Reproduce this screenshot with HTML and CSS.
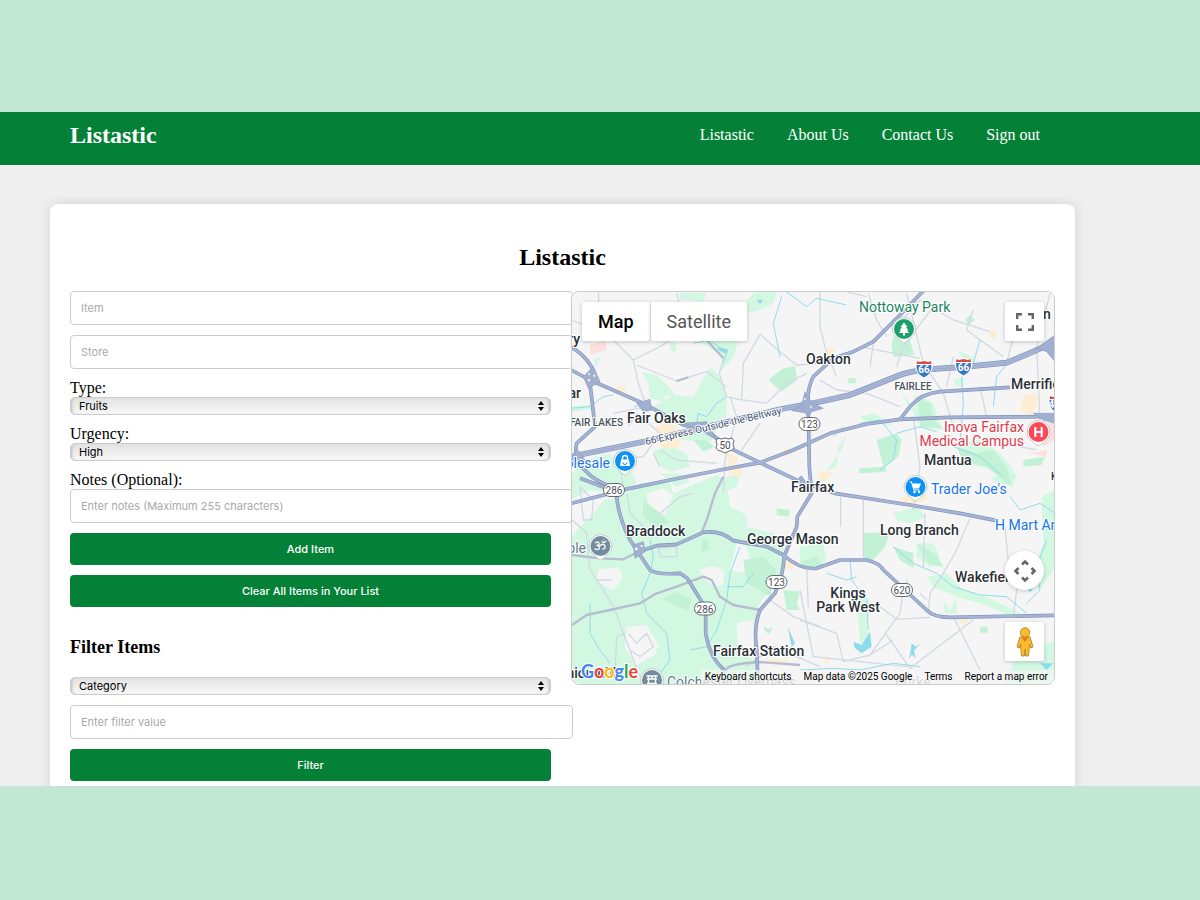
FILE: index.html
```html
<!DOCTYPE html>
<html lang="en">
<head>
<meta charset="utf-8">
<meta name="viewport" content="width=device-width, initial-scale=1">
<title>Listastic</title>
<link rel="stylesheet" href="styles.css">
</head>
<body>
<div class="screen">
  <header class="site-header">
    <a class="logo" href="#">Listastic</a>
    <nav class="nav">
      <a href="#">Listastic</a>
      <a href="#">About Us</a>
      <a href="#">Contact Us</a>
      <a href="#">Sign out</a>
    </nav>
  </header>
  <main class="card">
    <h1>Listastic</h1>
    <div class="columns">
      <div class="forms">
        <form class="stack">
          <input class="field" type="text" placeholder="Item" aria-label="Item">
          <input class="field" type="text" placeholder="Store" aria-label="Store">
          <div class="group">
            <label for="type">Type:</label>
            <div class="select-wrap">
              <select id="type"><option>Fruits</option><option>Vegetables</option></select>
              <svg class="arrows" viewBox="0 0 6 10"><path d="M3 0L6 4H0zM3 10L0 6H6z"/></svg>
            </div>
          </div>
          <div class="group">
            <label for="urgency">Urgency:</label>
            <div class="select-wrap">
              <select id="urgency"><option>High</option><option>Low</option></select>
              <svg class="arrows" viewBox="0 0 6 10"><path d="M3 0L6 4H0zM3 10L0 6H6z"/></svg>
            </div>
          </div>
          <div class="group">
            <label for="notes">Notes (Optional):</label>
            <input class="field" id="notes" type="text" placeholder="Enter notes (Maximum 255 characters)">
          </div>
          <button class="btn" type="button">Add Item</button>
          <button class="btn" type="button">Clear All Items in Your List</button>
        </form>
        <h2>Filter Items</h2>
        <form class="stack">
          <div class="select-wrap">
            <select aria-label="Filter by"><option>Category</option><option>Store</option></select>
            <svg class="arrows" viewBox="0 0 6 10"><path d="M3 0L6 4H0zM3 10L0 6H6z"/></svg>
          </div>
          <input class="field" type="text" placeholder="Enter filter value" aria-label="Filter value">
          <button class="btn" type="button">Filter</button>
        </form>
      </div>
      <section class="map" aria-label="Map">
        <svg class="map-art" viewBox="572 292 482 392" preserveAspectRatio="xMidYMid slice">
          <defs>
            <g id="pin"><path class="pin-edge" d="M-11.500 0a11.500 11.500 0 1 1 23 0c0 7-6 9-9.500 13q-2 2-4 0C-5.500 9-11.500 7-11.500 0z"/><circle r="10"/></g>
            <g id="oval"><rect x="-10.500" y="-6.500" width="21" height="13" rx="6.500"/></g>
            <g id="interstate">
              <path fill="#fff" d="M-8-9L-5-8 0-9 5-8 8-9 9-3Q8 6 0 9.500-8 6-9-3z"/>
              <path fill="#3b76c4" d="M-7.500-4H7.500Q8 5 0 8.500-8 5-7.500-4z"/>
              <path fill="#dc4b43" d="M-7-8L-4.500-7 0-8 4.500-7 7-8 7.500-5H-7.500z"/>
            </g>
          </defs>
          <rect class="land" x="560" y="280" width="510" height="420"/>
          <g transform="translate(560 280) scale(.33333)">
            <g class="green">
              <path d="M33 590L60 545 150 520 175 560 215 575 230 610 160 640 90 630 33 660z"/>
              <path d="M33 770L110 690 130 660 180 650 240 610 330 605 340 640 470 585 500 600 510 680 560 705 560 740 640 760 680 800 660 880 590 985 590 1110 600 1215H33z"/>
              <path d="M335 345L400 350 450 260 480 290 500 350 500 410 430 440 400 450 340 430 270 385 320 360z"/>
              <path d="M245 275L290 285 330 325 345 345 310 350 325 370 270 355 265 310z"/>
              <path d="M355 40H440L430 65 395 60 360 60zM560 100L600 90 640 70 650 33H590L560 60zM410 180L490 230 480 280 520 230 550 140 470 150z"/>
              <path d="M280 510L330 500 380 520 390 560 330 575 290 550zM300 580L360 580 390 605 350 620zM100 240L120 230 110 260zM330 185L350 190 345 220 332 210z"/>
              <path d="M500 590L540 585 530 620 490 640zM330 485L380 450 470 450 450 490 380 480z"/>
              <path d="M1070 345L1120 370 1135 420 1150 450 1080 440 1060 400zM1190 490L1260 480 1320 520 1360 570 1360 625 1300 570 1220 550z"/>
              <path d="M900 410L940 400 970 415 1000 440 960 430 920 425zM860 460L845 510 800 570 830 560 835 500zM1190 210L1235 230 1255 245 1215 245zM1183 300L1215 290 1205 320 1185 315z"/>
              <path d="M720 800L790 790 800 840 770 870 720 850zM1000 700L1070 680 1100 710 1050 730 1010 720zM1290 590L1370 580 1360 620 1310 610zM1070 790L1120 790 1140 830 1110 860 1070 830z"/>
              <path d="M1100 890L1160 880 1210 930 1280 950 1380 1000 1360 1010 1260 970 1190 950 1120 920zM1150 960L1170 990 1190 950 1190 1000 1155 1000zM1040 890L1060 940 1030 930zM890 950L930 960 920 1040 930 1090 900 1090z"/>
              <path d="M1370 1130L1485 1080V1215H1330L1350 1170zM1445 650L1485 630V860L1440 930 1410 900 1450 790z"/>
              <path d="M1025 335L1070 400 1050 390zM36 380L90 375 110 385 36 395z"/>
            </g>
            <path class="land-fill" d="M420 870q40-20 70 0 10 60-30 45-35-15-40-45zM115 870l60-8 15 30-30 40-50-30zM200 1040l60-5 35 60-10 30-55 30-35-50zM530 790l30 10 10 40-20 40-40-10zM260 640l50-15 30 20-25 60-50-20zM530 1030l50-10 5 120-50-20z"/>
            <g class="green-dark">
              <path d="M625 300L670 265 705 258 712 300 665 335zM1000 170L1045 160 1062 225 1000 230 995 200zM1075 360L1110 365 1120 420 1150 445 1080 440zM950 480L1010 460 1025 480 1015 530 975 560 980 575 895 580 900 565 970 560z"/>
              <path d="M1190 500L1250 520 1300 510 1340 560 1355 620 1280 560 1210 545zM910 760L990 755 975 800 940 840 910 835zM1000 800L1060 820 1060 865 1020 840zM1070 790L1130 825 1150 860 1110 855zM650 685L690 690 685 710 650 705zM550 840L610 830 650 870 630 950 560 910zM310 955L350 935 395 960 385 990 340 975zM670 930L720 935 710 970 720 990 680 990zM425 780L445 775 445 810 425 815z"/>
              <path d="M250 660L300 700 330 730 290 740 250 710zM1215 120L1230 105 1245 120 1225 135zM865 295h22v15h-22zM612 1040q12 5 14 8l10-8q3 10-10 22-14-10-14-22zM720 845l50-15 15 25-40 15zM1260 1040h22v18h-22zM1390 540l65-10-10 25-55 5zM400 480h35l30 20-35 15z"/>
            </g>
            <path class="peach" d="M170 320l30-5-5 30-25-5zM285 435l50-5 30 30-10 45-50 0zM500 520l35 10-5 25 20 20-10 15-30-5zM1290 155l20-8-4 30-16-5zM1015 655l80-20 10 25-60 15zM780 575l40 0-25 30-20-8zM800 200l25 5-8 22-15 0zM1390 345l40-5 5 35-25 30-30-10zM675 845l30 5-5 20-25-5zM610 1135l80 5-30 15zM1190 1020l40-5-15 20zM790 1125l25 10-15 20zM670 505l25 0-10 25-15-5z"/>
            <path class="pink" d="M90 195l45-15 5 30-50 15zM1440 440l45-20v60l-35 20zM1410 520l50-10v20z"/>
            <g class="street">
              <path d="M115 33L117 80 160 180 220 240 235 310 255 370M220 240L300 200 370 155M230 255L350 303 440 275 500 320M350 40L360 80M490 235L478 280 500 350 545 360 550 250 600 163 660 215 710 255 780 250M490 640L495 540 530 410 510 350M550 360L620 370 680 310 740 280M545 510L600 430M33 120L90 140M160 400L260 380M205 440L230 400 300 460 250 530 160 540M300 510L350 540 470 550M180 560L190 620M280 520L300 560"/>
              <path d="M780 35L780 140 800 220 830 290M780 300L830 330 920 340 1020 380M925 40L950 120 980 170M920 50L860 35M1000 150L1080 60 1180 120 1290 155M1040 40L1090 250 1150 340 1180 440M1120 80L1030 200 1010 260M1240 90L1220 150 1330 230M940 190L930 260M1470 40L1430 200 1440 420M1370 130L1340 250M900 200L1080 235M1260 320L1280 410M1180 230L1160 320"/>
              <path d="M1060 410L1080 560 1060 690M1230 715L1190 810 1150 880 1110 940 1105 1000M1095 700L1090 860M1335 740L1350 900M910 660V830M842 650V740M720 1020L830 1060 850 1145 930 1125 1020 1000 1030 930M720 930L740 1030 760 1130 1040 1160M980 1065L1050 1165 1240 1020M1180 1010L1260 1170M960 980L1010 1018 1110 1012M1380 500L1430 510M1000 1080L930 1125M1380 850L1360 1010M1080 940L1100 960"/>
              <path d="M85 830L90 870 130 930 165 990 190 1060 240 1190M36 720L80 760 85 830M60 620L100 660 95 720 70 720zM295 805L350 800 350 830 300 830zM110 900H155M560 1160L640 1100 780 1160M630 960L700 1010 780 1040M740 860L745 980M165 1180L170 1070 195 1060M200 640L210 700 250 740M300 700L360 650 400 640M205 1060L230 1090 260 1060 280 1100 240 1130 210 1110"/>
            </g>
            <g class="water">
              <path d="M675 33L700 50 740 80 770 55 860 75M665 50L640 130 660 230M490 250L500 220 450 180 400 190M33 385L90 380 130 350 160 345M500 350L470 370 440 410 415 400 410 430M270 780L280 830 270 880 245 940 260 1000 320 1060 330 1140 300 1180M540 800L510 880 500 960 470 1050 440 1100 390 1110M90 970L90 1060 120 1110 150 1150M500 920L550 920 580 880M1205 290L1210 370 1200 490M1260 180L1240 250M1350 240L1310 290 1300 380M900 430L960 420 1010 480 1000 540 960 570M1010 460L1080 440 1130 455M850 440L820 470M1180 500L1260 530 1330 590M1000 800L1060 850 1130 880 1180 920 1260 945 1340 950 1400 1000M1350 650L1380 690 1440 670 1485 700M1460 780L1430 860 1440 930 1400 970M870 840L875 900 920 960 925 1050M800 880L860 900 890 890M720 1170L820 1165 900 1170 1000 1150 1080 1160M1340 1140L1440 1125"/>
              <path class="water-fill" d="M880 1085L905 1095 930 1055 935 1100 905 1120 885 1105zM683 1040L705 1090 695 1100zM1055 1090l12 10 15-10-20 22 5 22-12-10-8 14 6-32zM475 200l30 10-5 12-25-12zM1440 1150l40 0-20 20zM1400 925l20 0-10 12zM220 380l10-5v8zM590 60l20 0-10 12z"/>
            </g>
            <g class="minor">
              <path d="M36 1035L80 1005 150 990 240 970 290 940 350 920 430 890 455 900 480 950 520 975 600 990M490 590L465 640 440 720 425 757M36 825L120 835 190 838 235 815M350 303L385 292M500 1165Q520 1150 600 1146L720 1155M480 33L510 20M440 180L490 235"/>
            </g>
            <g class="hwy-edge">
              <path d="M33 270L90 300 250 370 370 435 440 450 500 500 600 548 720 605 825 640 1050 675 1200 700 1310 722M33 670L210 625 330 600 480 570 600 548 700 510 810 460 920 432 1020 418 1170 412 1485 410M1020 418L1050 380Q1085 340 1140 335L1350 322"/>
              <path d="M1090 33L1020 105 940 185 880 215 820 235 760 290Q738 330 745 400L748 560 755 640 712 710 710 740 672 830Q672 880 645 940L600 990Q580 1040 590 1110L593 1180M235 815L290 797 350 793 430 757Q480 750 520 782L620 800 670 825Q720 870 770 865L840 840H920Q960 850 970 870L1100 990Q1120 1012 1170 1012L1485 1006"/>
              <path d="M33 200Q90 235 105 285L90 310 105 440 50 490Q35 550 110 600L160 625 170 650Q175 710 210 780L270 870Q290 885 360 880 385 895 385 900L437 985V1060Q450 1140 500 1175M60 595L180 640M720 590L755 640"/>
            </g>
            <g class="hwy">
              <path d="M33 270L90 300 250 370 370 435 440 450 500 500 600 548 720 605 825 640 1050 675 1200 700 1310 722M33 670L210 625 330 600 480 570 600 548 700 510 810 460 920 432 1020 418 1170 412 1485 410M1020 418L1050 380Q1085 340 1140 335L1350 322"/>
              <path d="M1090 33L1020 105 940 185 880 215 820 235 760 290Q738 330 745 400L748 560 755 640 712 710 710 740 672 830Q672 880 645 940L600 990Q580 1040 590 1110L593 1180M235 815L290 797 350 793 430 757Q480 750 520 782L620 800 670 825Q720 870 770 865L840 840H920Q960 850 970 870L1100 990Q1120 1012 1170 1012L1485 1006"/>
              <path d="M33 200Q90 235 105 285L90 310 105 440 50 490Q35 550 110 600L160 625 170 650Q175 710 210 780L270 870Q290 885 360 880 385 895 385 900L437 985V1060Q450 1140 500 1175M60 595L180 640M720 590L755 640"/>
            </g>
            <path class="i66-edge" d="M33 530L250 485 660 388 780 365 870 345 1020 285Q1060 268 1200 262L1340 248 1420 215 1485 185"/>
            <path class="i66" d="M33 530L250 485 660 388 780 365 870 345 1020 285Q1060 268 1200 262L1340 248 1420 215 1485 185"/>
            <path class="i66-line" d="M33 530L250 485 660 388 780 365 870 345 1020 285Q1060 268 1200 262L1340 248 1420 215 1485 185"/>
            <path class="ramp" d="M70 290L100 260 120 305 85 325zM230 370L270 358 275 390 250 395zM360 430L440 425 470 480 420 450zM735 335L725 375 695 392 735 398 745 410 755 395 790 385 755 368zM1430 205L1485 165V245L1460 215zM33 545L50 505 75 540zM220 795L250 785 255 815 225 835zM1420 400H1485V430L1450 420z"/>
            <path class="ramp-hole" d="M84 298h6v6h-6zM100 284h6v6h-6zM85 280h5v5h-5zM225 803h8v8h-8zM242 795h6v6h-6zM732 355h5v5h-5zM750 378h5v5h-5zM44 535h5v5h-5z"/>
          </g>
          <g class="town">
            <text x="806" y="364">Oakton</text>
            <text x="627" y="423">Fair Oaks</text>
            <text x="1011" y="389">Merrifield</text>
            <text x="924" y="465">Mantua</text>
            <text x="791" y="492">Fairfax</text>
            <text x="880" y="535">Long Branch</text>
            <text x="626" y="536">Braddock</text>
            <text x="747" y="544">George Mason</text>
            <text x="955" y="582">Wakefield</text>
            <text x="848" y="598" text-anchor="middle">Kings</text>
            <text x="848" y="612" text-anchor="middle">Park West</text>
            <text x="713" y="656">Fairfax Station</text>
            <text x="580" y="344" text-anchor="end">ry</text>
            <text x="581" y="398" text-anchor="end">ar</text>
            <text x="1043" y="319">n</text>
            <text class="tiny" x="1051" y="480">K</text>
            <text x="620" y="678" text-anchor="end">Union Mill</text>
          </g>
          <text class="area" x="623" y="426" text-anchor="end">FAIR LAKES</text>
          <text class="area" x="913" y="390" text-anchor="middle">FAIRLEE</text>
          <text class="road-name" transform="translate(646 445) rotate(-13)">66 Express Outside the Beltway</text>
          <g class="poi park"><text x="859" y="312">Nottoway Park</text></g>
          <g class="poi health"><text x="1024" y="432" text-anchor="end">Inova Fairfax</text><text x="1024" y="446" text-anchor="end">Medical Campus</text></g>
          <g class="poi shop"><text x="931" y="494">Trader Joe's</text><text x="995" y="530">H Mart Annandale</text><text x="610" y="468" text-anchor="end">Wholesale</text></g>
          <g class="poi place"><text x="586" y="553" text-anchor="end">Temple</text><text x="667" y="687">Colchester Overpass</text></g>
          <text class="burke" x="895" y="687">Burke</text>

          <g fill="#1e9e6b" transform="translate(904 329)"><use href="#pin"/><path fill="#fff" d="M0-6.500L3.500-2H2L4.500 1.500H3L5 4H1V6.500H-1V4H-5L-3 1.500H-4.500L-2-2H-3.500z"/></g>
          <g fill="#0c92f5" transform="translate(625 461)"><use href="#pin"/><path fill="#fff" d="M-4-1.500H4L5 5H-5z"/><path fill="none" stroke="#fff" stroke-width="1.400" d="M-2.500-1V-3a2.500 2.500 0 0 1 5 0v2"/><path fill="none" stroke="#0c92f5" d="M-2 1.500a2 2 0 0 0 4 0"/></g>
          <g fill="#0c92f5" transform="translate(915.500 487)"><use href="#pin"/><path fill="#fff" d="M-3.500-3.500H5.500L3.500 1.500H-2z"/><path fill="none" stroke="#fff" stroke-width="1.200" d="M-6-5H-4L-1.500 3H4"/><circle fill="#fff" cx="-1" cy="5" r="1.200"/><circle fill="#fff" cx="3.500" cy="5" r="1.200"/></g>
          <g fill="#ff4856" transform="translate(1038.500 432)"><use href="#pin"/><path fill="none" stroke="#fff" stroke-width="2.200" d="M-3.200-5V5M3.200-5V5M-3 0H3"/></g>
          <g fill="#728d9c" transform="translate(600.500 546)"><use href="#pin"/><path fill="none" stroke="#fff" stroke-width="1.300" d="M-5.500-3q4-2.500 4 .5 0 2-2.500 2 3 0 3 2.500-1 3-5 .5M-1 0q4-3.500 5.500 0 .5 3-2.500 3M1-4.500q2.500 2 4.500-.5M3-6.500v.8"/></g>
          <g fill="#728d9c" transform="translate(652 680)"><use href="#pin"/><path fill="none" stroke="#fff" stroke-width="1.400" d="M-5.500-4H5.500M-5-1H5M-3.500-5V5M3.500-5V5M0-4V-1M-5 3.500H5"/></g>

          <g class="shields">
            <g transform="translate(614 490)"><use href="#oval"/><text y="4">286</text></g>
            <g transform="translate(705 608.500)"><use href="#oval"/><text y="4">286</text></g>
            <g transform="translate(809.500 424)"><use href="#oval"/><text y="4">123</text></g>
            <g transform="translate(776.500 582)"><use href="#oval"/><text y="4">123</text></g>
            <g transform="translate(902 590)"><use href="#oval"/><text y="4">620</text></g>
            <g transform="translate(725 445)"><path d="M-7-7L-4-6 0-7 4-6 7-7 9-4Q7-1 9 3 8 6 4 6L0 8-4 6Q-8 6-9 3-7-1-9-4z"/><text y="4">50</text></g>
          </g>
          <g class="interstates">
            <g transform="translate(924 369)"><use href="#interstate"/><text y="4">66</text></g>
            <g transform="translate(963.500 367)"><use href="#interstate"/><text y="4">66</text></g>
            <g transform="translate(1057 404)"><use href="#interstate"/><text y="4">495</text></g>
          </g>
          <text class="google" x="581" y="678"><tspan fill="#4285f4">G</tspan><tspan fill="#ea4335">o</tspan><tspan fill="#fbbc05">o</tspan><tspan fill="#4285f4">g</tspan><tspan fill="#34a853">l</tspan><tspan fill="#ea4335">e</tspan></text>
        </svg>
        <div class="map-types">
          <button class="type-btn active" type="button">Map</button>
          <button class="type-btn" type="button">Satellite</button>
        </div>
        <button class="tool fullscreen" type="button" aria-label="Toggle fullscreen view">
          <svg viewBox="0 0 18 18" width="18" height="18"><path fill="none" stroke="#666" stroke-width="2.400" d="M1.200 6V1.200H6M12 1.200H16.800V6M16.800 12V16.800H12M6 16.800H1.200V12"/></svg>
        </button>
        <button class="tool pan" type="button" aria-label="Map camera controls">
          <svg viewBox="0 0 24 24" width="24" height="24"><path fill="none" stroke="#666" stroke-width="2.600" d="M9 5.500L12 2.500L15 5.500M9 18.500L12 21.500L15 18.500M5.500 9L2.500 12L5.500 15M18.500 9L21.500 12L18.500 15"/></svg>
        </button>
        <button class="tool pegman" type="button" aria-label="Street View">
          <svg viewBox="0 0 18 30" width="18" height="30"><path fill="#fbbc2b" stroke="#b98a2b" d="M4 10Q9 8 14 10L17 20 14.500 21 13.500 17 12.500 29H9.700L9 22 8.300 29H5.500L4.500 17 3.500 21 1 20z"/><path fill="#e07a2c" d="M5.500 10.500H12.500L9 15z"/><circle cx="9" cy="5.500" r="4.700" fill="#fbbc2b" stroke="#b98a2b"/></svg>
        </button>
        <div class="attribution">
          <button type="button">Keyboard shortcuts</button>
          <span>Map data ©2025 Google</span>
          <a href="#">Terms</a>
          <a href="#">Report a map error</a>
        </div>
      </section>
    </div>
  </main>
</div>
</body>
</html>
```

FILE: styles.css
```css
* { box-sizing: border-box; }

body {
  margin: 0;
  height: 100vh;
  padding: 112px 0 114px;
  background: #c2e8d3;
  font-family: "Liberation Serif", "Times New Roman", serif;
  font-size: 16px;
  color: #000;
}

.screen {
  height: 100%;
  overflow: hidden;
  background: #efefef;
}

.site-header {
  display: flex;
  justify-content: space-between;
  align-items: center;
  padding: 9px 160px 16px 70px;
  background: #048136;
  line-height: 28px;
}
.site-header a { color: #fff; text-decoration: none; }
.logo { font-size: 24px; font-weight: bold; }
.nav { display: flex; gap: 33px; }

.card {
  margin: 39px 125px 0 50px;
  padding: 39px 20px 20px;
  background: #fff;
  border-radius: 8px;
  box-shadow: 0 0 12px rgba(0, 0, 0, .12);
}
h1 {
  margin: 0 0 20px;
  font-size: 24px;
  line-height: 28px;
  text-align: center;
}
h2 {
  margin: 30px 0 20px;
  font-size: 18px;
  line-height: 20px;
}

.columns {
  display: grid;
  grid-template-columns: minmax(0, 481fr) minmax(0, 484fr);
  gap: 20px;
  align-items: start;
}
.stack { display: flex; flex-direction: column; gap: 10px; }
.group { display: flex; flex-direction: column; }
label { line-height: 18px; }

.field {
  box-sizing: content-box;
  width: 100%;
  height: 14px;
  padding: 9px 10px;
  border: 1px solid #ccc;
  border-radius: 4px;
  background: #fff;
  font: 11px/14px Inter, sans-serif;
}
.field::placeholder { color: #aaa; opacity: 1; }

.select-wrap { position: relative; display: flex; }
select {
  appearance: none;
  width: 100%;
  height: 18px;
  padding: 0 8px;
  border: 1px solid #ccc;
  border-radius: 5px;
  background: linear-gradient(#e2e2e2, #f8f8f8);
  box-shadow: inset 3px 0 3px -2px #bbb, inset -3px 0 3px -2px #bbb;
  font: 11px/14px Inter, sans-serif;
  color: #000;
}
.arrows {
  position: absolute;
  right: 7px;
  top: 4px;
  width: 6px;
  height: 10px;
  pointer-events: none;
}

.btn {
  height: 32px;
  padding: 0;
  border: 0;
  border-radius: 4px;
  background: #048136;
  color: #fff;
  font: 500 11px/14px Inter, sans-serif;
}

.map {
  position: relative;
  overflow: hidden;
  border: 1px solid #ccc;
  border-radius: 8px;
  aspect-ratio: 484 / 394;
  background: #f5f5f5;
  font-family: Roboto, sans-serif;
}
.map-art { display: block; width: 100%; height: 100%; }

.land, .land-fill { fill: #f5f5f5; }
.green { fill: #d3f8e2; }
.green-dark { fill: #c3f1d5; }
.peach { fill: #fdeed3; }
.pink { fill: #fce0de; }
.street { fill: none; stroke: #d2d9e4; stroke-width: 4; stroke-linejoin: round; }
.minor { fill: none; stroke: #b6bdd0; stroke-width: 7; stroke-linejoin: round; }
.water { fill: none; stroke: #90daee; stroke-width: 3; stroke-linejoin: round; }
.water .water-fill { fill: #90daee; stroke: none; }
.hwy-edge { fill: none; stroke: #8294bd; stroke-width: 11; stroke-linejoin: round; }
.hwy { fill: none; stroke: #a6b4d4; stroke-width: 7; stroke-linejoin: round; }
.i66-edge { fill: none; stroke: #8294bd; stroke-width: 17; }
.i66 { fill: none; stroke: #a9b7d7; stroke-width: 13; }
.i66-line { fill: none; stroke: #94a4c9; stroke-width: 2; }
.ramp { fill: #a1b0d1; stroke: #8c9dc4; stroke-width: 2; }
.ramp-hole { fill: #f5f5f5; }

.map-art text {
  stroke: #fff;
  stroke-width: 2px;
  stroke-linejoin: round;
  paint-order: stroke;
}
.town { font-size: 14px; font-weight: 500; fill: #2b2f36; }
.tiny { font-size: 10px; }
.area { font-size: 10px; font-weight: 500; fill: #4c535c; }
.road-name { font-size: 10px; fill: #3c4d70; }
.poi { font-size: 14px; }
.park { fill: #1c8560; }
.health { fill: #dc3a4b; }
.shop { fill: #1a73e8; }
.place { fill: #5f7c8c; }
.burke { font-size: 14px; fill: #9a9a9a; }
.pin-edge { fill: #fff; stroke: #c4c9cc; stroke-width: 1; }
.shields { fill: #fff; stroke: #666b72; stroke-width: 1; text-anchor: middle; font-size: 10px; }
.map-art .shields text { fill: #4a4f57; stroke: none; }
.interstates { text-anchor: middle; font-size: 10px; font-weight: 700; }
.map-art .interstates text { fill: #fff; stroke: none; }
.google { font-family: Lato, sans-serif; font-size: 18px; font-weight: 700; }

.map-types {
  position: absolute;
  top: 10px;
  left: 10px;
  display: flex;
  gap: 1px;
}
.type-btn {
  height: 39px;
  padding: 0 16px;
  border: 0;
  border-radius: 2px;
  background: #fff;
  box-shadow: 0 1px 4px rgba(0, 0, 0, .2);
  font: 18px/24px Roboto, sans-serif;
  color: #565656;
}
.type-btn.active { font-weight: 500; color: #000; }

.tool {
  position: absolute;
  right: 10px;
  display: grid;
  place-items: center;
  width: 39px;
  height: 39px;
  padding: 0;
  border: 0;
  border-radius: 2px;
  background: #fff;
  box-shadow: 0 1px 4px rgba(0, 0, 0, .2);
}
.fullscreen { top: 10px; }
.pan { bottom: 94px; border-radius: 50%; }
.pegman { bottom: 23px; }

.attribution {
  position: absolute;
  right: 0;
  bottom: 0;
  display: flex;
  gap: 12px;
  padding: 0 6px 0 4px;
  background: rgba(245, 245, 245, .7);
  font-size: 10px;
  line-height: 14px;
  white-space: nowrap;
}
.attribution button {
  padding: 0;
  border: 0;
  background: none;
  font: inherit;
  color: inherit;
}
.attribution a { color: inherit; text-decoration: none; }
```
